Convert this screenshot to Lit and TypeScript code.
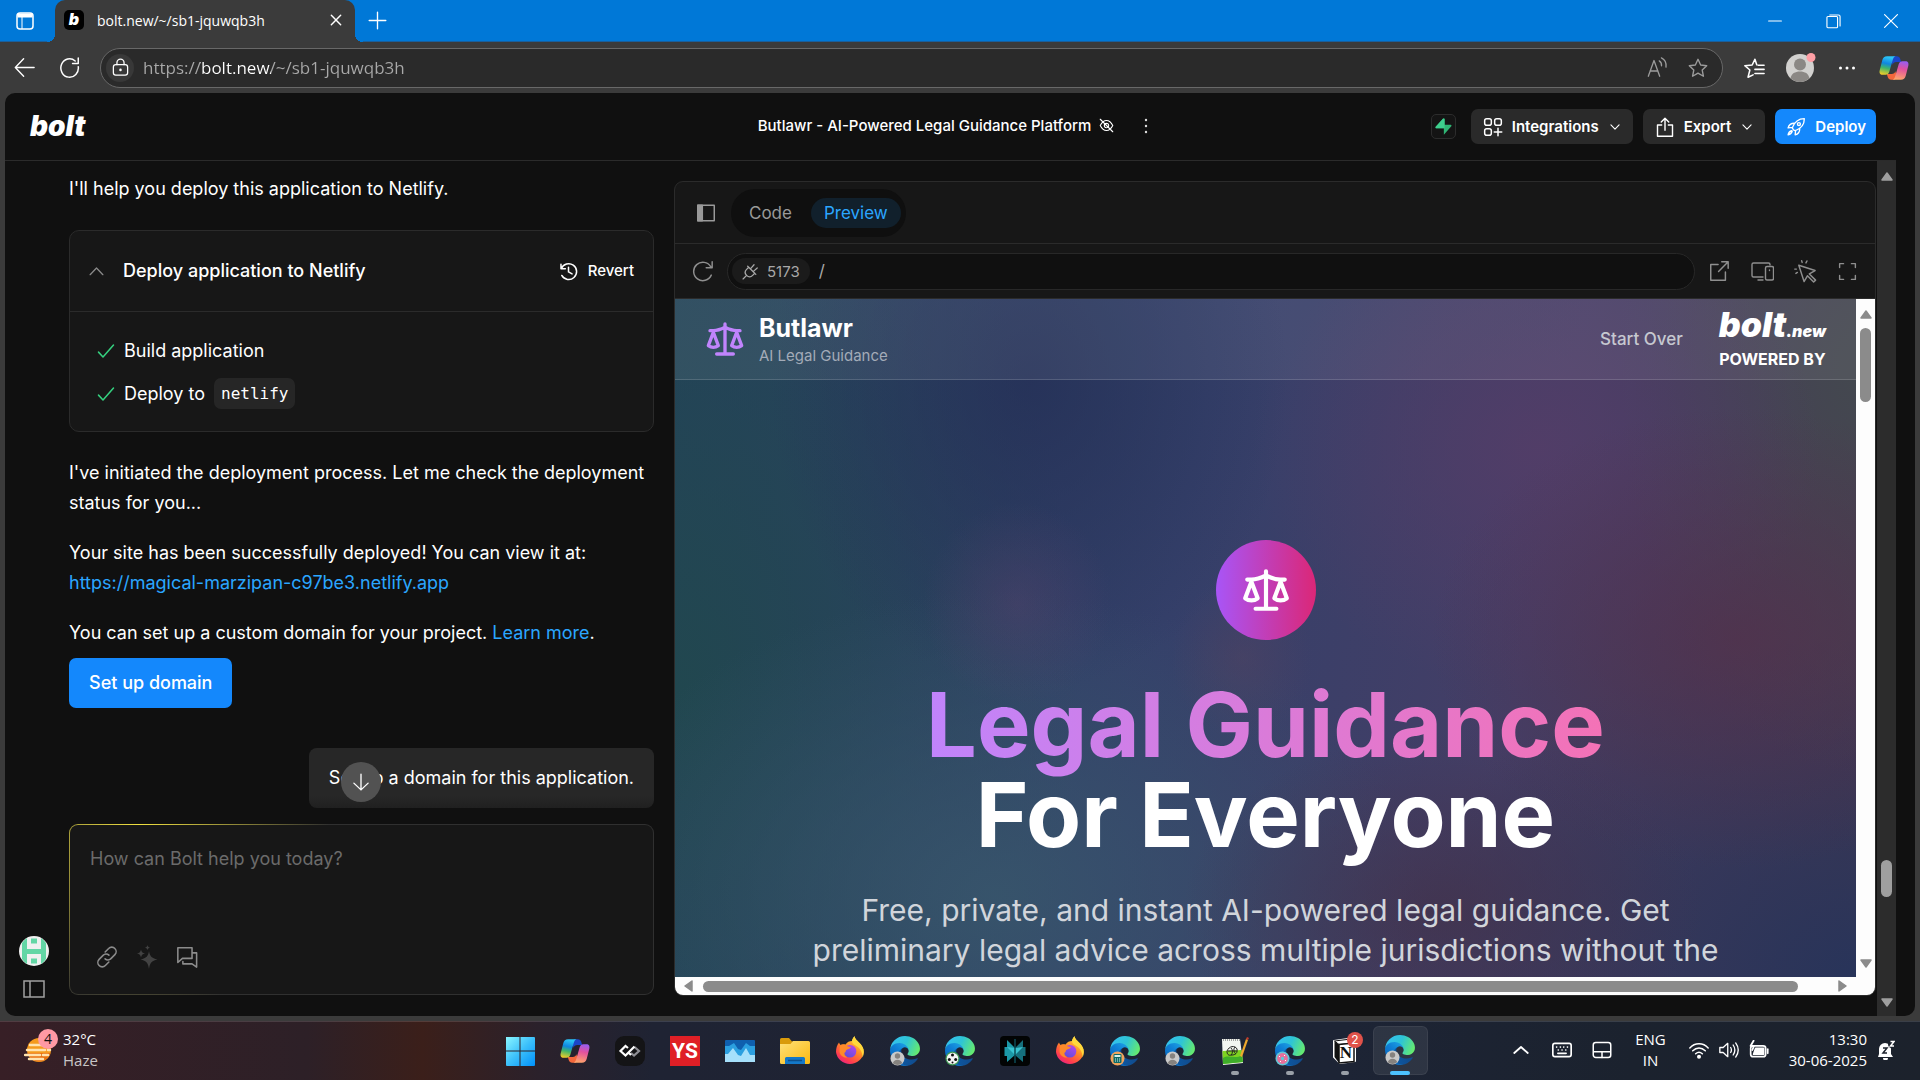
import { LitElement, html, css, svg, nothing, type TemplateResult } from "lit";
import { customElement } from "lit/decorators.js";
import { classMap } from "lit/directives/class-map.js";

/** Stroked icon drawn on a 24-unit grid. */
const line = (size: number, body: TemplateResult, width = 1.5, cls = "") => html`
  <svg class="icon ${cls}" width=${size} height=${size} viewBox="0 0 24 24" fill="none"
    stroke="currentColor" stroke-width=${width} stroke-linecap="round" stroke-linejoin="round"
    aria-hidden="true">${body}</svg>`;

const chevronDown = svg`<path d="m5 8.500 7 7 7-7"/>`;
const chevronUp = svg`<path d="m3 16.500 9-9.500 9 9.500"/>`;
const scales = svg`
  <path d="m16 16 3-8 3 8c-.87.65-1.920 1-3 1s-2.130-.35-3-1Z"/>
  <path d="m2 16 3-8 3 8c-.87.65-1.920 1-3 1s-2.130-.35-3-1Z"/>
  <path d="M7 21h10M12 3v18M3 7h2c2 0 5-1 7-2 2 1 5 2 7 2h2"/>`;
const star = svg`<path d="m12 2.500 2.900 6.200 6.600.8-4.900 4.700 1.300 6.800-5.900-3.400-5.900 3.400 1.300-6.800-4.900-4.700 6.600-.8z"/>`;

const copilot = (size: number) => html`
  <svg class="icon" width=${size} height=${size} viewBox="0 0 30 30" aria-hidden="true">
    <path d="M14.500 4h3.200c1.600 0 2.600.8 3.100 2.300l.9 3h-4.600c-1.800 0-2.800.8-3.400 2.600l-1.500-5.500z" fill="#1b45c8"/>
    <path d="M15.500 26h-3.200c-1.600 0-2.600-.8-3.100-2.300l-.9-3h4.600c1.800 0 2.800-.8 3.400-2.600l1.500 5.500z" fill="#f4683c"/>
    <path d="M8.500 4h8c-1.500.5-2.200 1.700-2.700 3.500l-3.200 11c-.6 1.900-1.700 2.800-3.500 2.800H4.300c-2.500 0-3.300-2-2.700-4.300L4 7.800C4.700 5.300 6 4 8.500 4z" fill="url(#cp1)"/>
    <path d="M21.500 26h-8c1.500-.5 2.200-1.700 2.700-3.500l3.200-11c.6-1.900 1.700-2.800 3.500-2.800h2.800c2.500 0 3.300 2 2.700 4.300L26 22.200c-.7 2.500-2 3.800-4.500 3.800z" fill="url(#cp2)"/>
  </svg>`;

const personBadge = svg`
  <circle cx="7.500" cy="22.500" r="7" fill="#c9c9c9"/>
  <circle cx="7.500" cy="20" r="2.700" fill="#85827f"/>
  <path d="M2.800 27.200a4.900 4.900 0 0 1 9.400 0 7 7 0 0 1-9.400 0z" fill="#85827f"/>`;
const ballBadge = svg`
  <circle cx="7.500" cy="22.500" r="7" fill="#3f9a55"/><circle cx="7.500" cy="22.500" r="5.800" fill="#f4f4f4"/>
  <circle cx="7.500" cy="19" r="1.500" fill="#111"/><circle cx="4.300" cy="23.500" r="1.500" fill="#111"/>
  <circle cx="10.700" cy="23.500" r="1.500" fill="#111"/><circle cx="7.500" cy="26.500" r="1" fill="#111"/>`;
const calcBadge = svg`
  <circle cx="7.500" cy="22.500" r="7" fill="#f0a45d"/><rect x="3.500" y="18" width="8" height="9" rx="1" fill="#0f6b66"/>
  <rect x="4.500" y="19" width="6" height="2" fill="#d9f0ea"/>
  <path d="M5 23h1M7 23h1M9 23h1M5 25h1M7 25h1M9 25h1" stroke="#d9f0ea"/>`;
const donutBadge = svg`
  <circle cx="7.500" cy="22.500" r="7" fill="#63c7d6"/><circle cx="7.500" cy="22.500" r="3.600" fill="none" stroke="#e86f9c" stroke-width="3.600"/>
  <path d="M4 21l1-1M9 19l1 1M11 24l-1 1M5 25l1 1" stroke="#fff"/>`;

const edge = (badge: unknown) => html`
  <svg class="icon" width="30" height="30" viewBox="0 0 30 30" aria-hidden="true">
    <g transform="scale(.117)">
      <path fill="url(#eg1)" d="M231 190.500c-3.400 1.800-6.900 3.400-10.500 4.700a101.500 101.500 0 0 1-35.900 6.500c-47.300 0-88.500-32.500-88.500-74.300 0-11.400 6.400-21.900 16.400-27.300-42.800 1.800-53.800 46.400-53.800 72.500 0 73.900 68.100 81.400 82.800 81.400 7.900 0 19.800-2.300 27-4.600l1.300-.4a128.300 128.300 0 0 0 66.600-52.800 4 4 0 0 0-5.400-5.700z"/>
      <path fill="url(#eg2)" d="M105.700 241.400a79.200 79.200 0 0 1-22.700-21.300 80.700 80.700 0 0 1 29.500-120c3.200-1.500 8.400-4.100 15.500-4a32.400 32.400 0 0 1 25.700 13 31.900 31.900 0 0 1 6.300 18.700c0-.2 24.500-79.600-80-79.600-43.900 0-80 41.700-80 78.200a130.200 130.200 0 0 0 12.100 56 128 128 0 0 0 156.400 67 75.500 75.500 0 0 1-62.800-8z"/>
      <path fill="url(#eg3)" d="M152.300 148.900c-.9 1-3.400 2.500-3.400 5.600 0 2.600 1.700 5.100 4.700 7.200 14.400 10 41.500 8.700 41.600 8.700 10.700 0 21.100-2.900 30.300-8.300A61.400 61.400 0 0 0 256 109.200c.3-22.400-8-37.300-11.300-43.900C223.500 23.900 177.700 0 128 0A128 128 0 0 0 0 126.200c.5-36.500 36.800-66 80-66 3.500 0 23.500.3 42 10.100 16.300 8.600 24.900 18.900 30.800 29.200 6.200 10.700 7.300 24.100 7.300 29.500 0 5.300-2.700 13.300-7.800 19.900z"/>
    </g>
    ${badge}
  </svg>`;

const firefox = html`
  <svg class="icon" width="30" height="30" viewBox="0 0 30 30" aria-hidden="true">
    <path d="M4 6.500c.3 1 .8 1.700 1.500 2.400C7 8 9 8 10.500 8.600 12 6 14.500 5 17 5c.3-1.700 1.200-3.400 2.600-4.700 .3 2.600 2.200 3.900 4.200 5.900 3.300 3.200 5 6 5 9.800A14 13.500 0 0 1 1 16c0-3.600 1-7 3-9.500z" fill="url(#ff1)"/>
    <circle cx="15" cy="15.300" r="6.300" fill="url(#ff2)"/>
    <path d="M5.500 9c2-.9 4-.6 5.500.5 1.500 1 3 1.200 5 1.300-.3 1.600-2 2.200-3.700 2.700-1.300.5-1.800 1.500-1.600 2.600-2 .3-2 4 1.800 5.300-5 .5-8-3-8-6.500 0-2.300.3-4.300 1-5.900z" fill="#ff8a2a"/>
    <path d="M19.600.3c.3 2.600 2.200 3.900 4.200 5.900 3.300 3.200 5 6 5 9.800 0 2-.4 3.800-1.200 5.400-.2-5.900-2.600-9.400-7.100-11.900C18 8 17 7 17 5c.3-1.700 1.200-3.400 2.600-4.700z" fill="#ffd93b"/>
  </svg>`;

interface TaskbarApp { name: string; icon: TemplateResult; open?: boolean; active?: boolean; }

const taskbarApps: TaskbarApp[] = [
  { name: "Start", icon: html`<svg class="icon" width="30" height="30" viewBox="0 0 30 30" aria-hidden="true"><path fill="url(#wn)" d="M1 1h13.500v13.500H1zM15.500 1H29a1 1 0 0 1 1 1v12.500H15.500zM1 15.500h13.500V30H2a1 1 0 0 1-1-1zM15.500 15.500H30V29a1 1 0 0 1-1 1H15.500z"/></svg>` },
  { name: "Copilot", icon: copilot(32) },
  { name: "Dev tools", icon: html`<svg class="icon" width="30" height="30" viewBox="0 0 30 30" aria-hidden="true"><rect width="30" height="30" rx="9" fill="#141416"/><path d="m16 17 3 2.500 5-4.500-4.500-4" fill="none" stroke="#8f8f95" stroke-width="2.200"/><path d="m13 12-2.500-2L5.500 15l5 4.500 9-9M13.500 16.500l2.500 2.500" fill="none" stroke="#fff" stroke-width="2.200"/></svg>` },
  { name: "YourStory", icon: html`<span class="ys">YS</span>` },
  { name: "Performance", icon: html`<svg class="icon" width="30" height="30" viewBox="0 0 30 30" aria-hidden="true"><rect y="4" width="30" height="22" rx="1" fill="#0f5fae"/><path d="M0 10h4l5-3 4 6 3 1 5-7 4 3h5v15H0z" fill="#2b9fe0"/><path d="M0 18h3l5-6 5 7 3 1 5-8 4 7h5v7H0z" fill="#a6e0fb"/></svg>` },
  { name: "File Explorer", icon: html`<svg class="icon" width="30" height="30" viewBox="0 0 30 30" aria-hidden="true"><path d="M0 3.500A1.500 1.500 0 0 1 1.500 2H9l3 3.500H28v8H0z" fill="#d99b0b"/><path d="M0 8h10.500L13 5h15.500A1.500 1.500 0 0 1 30 6.500v20a1.500 1.500 0 0 1-1.500 1.500h-27A1.500 1.500 0 0 1 0 26.500z" fill="url(#fd)"/><path d="M5 28v-5.500A1.500 1.500 0 0 1 6.500 21h17a1.500 1.500 0 0 1 1.500 1.500V28z" fill="#1478c8"/><path d="M8 24.500h14" stroke="#0d4f8b" stroke-width="1.500"/></svg>` },
  { name: "Firefox", icon: firefox },
  { name: "Edge, personal", icon: edge(personBadge) },
  { name: "Edge, football", icon: edge(ballBadge) },
  { name: "Perplexity", icon: html`<svg class="icon" width="30" height="30" viewBox="0 0 30 30" aria-hidden="true"><rect width="30" height="30" rx="4" fill="#020404"/><path d="M15 12 7 4v7H4.500v9H7v6l8-7z" fill="#1c98a6"/><path d="m15 12 8-8v7h2.500v9H23v6l-8-7z" fill="#15707d"/><path d="m15 12-8-1 8 8 8-8z" fill="#38c3cf"/><path d="M15 3v24" stroke="#0c4a54" stroke-width="1.500"/></svg>` },
  { name: "Firefox, private", icon: firefox },
  { name: "Edge, calculator", icon: edge(calcBadge) },
  { name: "Edge, profile 2", icon: edge(personBadge) },
  { name: "Notepad++", open: true, icon: html`<svg class="icon" width="30" height="30" viewBox="0 0 30 30" aria-hidden="true"><path d="m2 3 18 0 3 24-20 2z" fill="#f3f6f1"/><path d="m2.500 15 19-1 1.500 12-20 2z" fill="#7ed321"/><path d="M3 22c6-4 12 2 19-3l1 7-20 2z" fill="#3fae2a"/><path d="M3 4h17" stroke="#555" stroke-dasharray="1 1"/><path d="M7 15c2-5 8-6 10-2 1 4-2 6-5 6-4 1-5-1-5-4zM8 15h9M11 12c2 2 2 5 0 7M15 11c-2 2-1 6 1 7" fill="none" stroke="#222"/><path d="m20 20 6-17 2 1-6 17z" fill="#f0a92e"/><path d="m26 3 1-2 2 1-1 2z" fill="#c43b2c"/></svg>` },
  { name: "Edge, profile 3", open: true, icon: edge(donutBadge) },
  { name: "Notion", open: true, icon: html`<span class="notion"><svg class="icon" width="30" height="30" viewBox="0 0 30 30" aria-hidden="true"><path d="m4 5 14-2 7 4v18l-15 2-6-6z" fill="#fff" stroke="#fff" stroke-width="2" stroke-linejoin="round"/><path d="m4.500 5 12.500-1.500L24 7 9 8.500z" fill="#fff" stroke="#111"/><path d="m4.500 5 4.500 4v18l-4.500-6z" fill="#111"/><path d="m9 8.500 15-1.500v18.500L9 27z" fill="#fff" stroke="#111" stroke-width="1.500"/></svg><b class="notion-n">N</b><b class="notion-count">2</b></span>` },
  { name: "Edge, bolt.new", active: true, icon: edge(personBadge) },
];

@customElement("app-root")
export class AppRoot extends LitElement {
  static styles = css`
    :host {
      display: block;
      --ui: "Open Sans", "Noto Sans", sans-serif;
      --inter: "Inter", "Liberation Sans", sans-serif;
      --line: #2b2b2b;
      --blue: #1488fc;
      --link: #2ba6ff;
      font-family: var(--inter);
      color: #fff;
    }
    * { box-sizing: border-box; }
    button { font: inherit; color: inherit; background: none; border: 0; padding: 0; margin: 0; display: flex; align-items: center; justify-content: center; cursor: pointer; }
    input, textarea { font: inherit; color: inherit; background: none; border: 0; padding: 0; margin: 0; outline: 0; }
    a { color: var(--link); text-decoration: none; }
    p, h1, h2, ul { margin: 0; padding: 0; list-style: none; font-weight: inherit; }
    h2 { font-size: inherit; }
    .icon { display: block; flex: none; }
    .defs { position: absolute; }
    .desktop { height: 100vh; display: flex; flex-direction: column; background: #3b3b3b; overflow: hidden; }

    /* window title bar */
    .titlebar { display: flex; height: 42px; flex: none; background: #0078d7; font-family: var(--ui); box-shadow: inset 0 -1px #1a5f9c; }
    .tab-actions { width: 50px; }
    .tab { display: flex; align-items: center; width: 300px; margin: 0 5px; padding: 0 12px 2px 9px; gap: 13px; background: #3b3b3b; border-radius: 10px 10px 0 0; font-size: 14px; position: relative; }
    .tab::before, .tab::after { content: ""; position: absolute; bottom: 0; width: 8px; height: 8px; }
    .tab::before { left: -8px; background: radial-gradient(circle at 0 0, #0078d7 8px, #3b3b3b 8px); }
    .tab::after { right: -8px; background: radial-gradient(circle at 100% 0, #0078d7 8px, #3b3b3b 8px); }
    .favicon { width: 20px; height: 20px; border-radius: 5px; background: #000; font: italic 900 16px/19px var(--inter); text-align: center; }
    .tab-title { flex: 1; }
    .new-tab { width: 34px; height: 40px; }
    .window-controls { margin-left: auto; display: flex; }
    .window-controls button { width: 58px; }

    /* browser toolbar */
    .toolbar { display: flex; align-items: center; height: 51px; flex: none; padding: 0 10px 0 14px; font-family: var(--ui); }
    .toolbar .reload { margin: 0 20px 0 24px; }
    .address { flex: 1; display: flex; align-items: center; height: 40px; border: 1px solid #686868; border-radius: 20px; background: #2a2a2a; padding: 0 13px 0 5px; }
    .site-info { width: 28px; height: 28px; border-radius: 50%; background: #383838; }
    .url { flex: 1; min-width: 0; margin-left: 9px; font-size: 17px; line-height: 30px; color: transparent; background: linear-gradient(90deg, #a9a9a9 57px, #fff 57px 128px, #a9a9a9 128px); background-clip: text; -webkit-background-clip: text; }
    .address-tools { display: flex; gap: 19px; color: #9c9c9c; }
    .browser-tools { display: flex; align-items: center; gap: 20px; margin-left: 20px; }
    .profile { border-radius: 50%; }

    /* page frame */
    .viewport { flex: 1; min-height: 0; padding: 0 5px 5px; }
    .page { height: 100%; display: flex; flex-direction: column; background: #101010; border-radius: 10px; overflow: hidden; padding-right: 19px; }
    .app-header { display: grid; grid-template-columns: 1fr auto 1fr; align-items: center; height: 68px; flex: none; padding: 0 20px 0 25px; border-bottom: 1px solid var(--line); font-size: 15px; font-weight: 500; }
    .logo { font: italic 900 28px/32px var(--inter); color: #fff; justify-self: start; padding-bottom: 2px; }
    .project { display: flex; align-items: center; gap: 8px; padding: 0 0 2px 14px; }
    .project .menu { width: 32px; height: 20px; margin-left: 8px; }
    .header-actions { display: flex; justify-self: end; align-items: center; gap: 10px; }
    .supabase { width: 25px; height: 25px; border: 1px solid #2c2c2c; border-radius: 5px; background: #141414; margin-right: 5px; }
    .action { height: 35px; border-radius: 7px; background: #2a2a2a; padding: 0 11px 0 12px; gap: 9px; font-weight: 600; }
    .action.primary { background: var(--blue); padding: 0 10px 0 11px; }

    .main { flex: 1; min-height: 0; display: grid; grid-template-columns: 64px 585px minmax(0, 1fr) 20px; }
    .rail { display: flex; flex-direction: column; justify-content: flex-end; align-items: center; gap: 12px; padding: 0 6px 16px 0; color: #a0a0a0; }

    /* conversation */
    .chat { display: flex; flex-direction: column; min-height: 0; padding-bottom: 21px; font-size: 18px; line-height: 30px; }
    .messages { flex: 1; min-height: 0; display: flex; flex-direction: column; position: relative; padding-top: 13px; gap: 20px; }
    .artifact { border: 1px solid var(--line); border-radius: 10px; background: #171717; margin: 6px 0; }
    .artifact-head { display: flex; align-items: center; height: 81px; border-bottom: 1px solid var(--line); padding: 0 19px 0 18px; font-weight: 500; color: #fff; }
    .artifact-head .toggle { color: #8a8a8a; margin-right: 18px; }
    .artifact-title { flex: 1; }
    .revert { gap: 10px; font-size: 15px; }
    .steps { display: flex; flex-direction: column; gap: 12px; padding: 23px 27px 22px; }
    .steps li { display: flex; align-items: center; height: 31px; gap: 9px; }
    .steps .icon { color: #35d07f; }
    .code { font: 16px/31px "DejaVu Sans Mono", monospace; background: #262626; border-radius: 7px; padding: 0 7px; }
    .domain { display: flex; flex-direction: column; align-items: flex-start; gap: 10px; margin-bottom: 20px; }
    .domain-button { height: 50px; padding: 0 20px; border-radius: 7px; background: var(--blue); font-weight: 500; }
    .bubble { align-self: flex-end; background: linear-gradient(#272727 80%, #202020); border-radius: 8px; padding: 15px 20px; }
    .jump { position: absolute; left: 272px; bottom: 22px; width: 40px; height: 40px; border-radius: 50%; background: #525252; }
    .composer { height: 171px; flex: none; display: flex; flex-direction: column; border: 1px solid transparent; border-radius: 9px; padding: 19px 20px 25px; background: linear-gradient(#171717, #171717) padding-box, radial-gradient(circle 190px at 70px 0, #f0e040, #303030) border-box; }
    .composer textarea { flex: 1; min-height: 0; resize: none; line-height: 30px; }
    .composer textarea::placeholder { color: #6b6b6b; }
    .composer-tools { display: flex; gap: 18px; padding-left: 6px; color: #8c8c8c; }
    .composer-tools .off { color: #424242; }

    /* workbench */
    .workbench { margin: 20px 0 20px 20px; display: flex; flex-direction: column; min-height: 0; border: 1px solid var(--line); border-radius: 9px; background: #171717; overflow: hidden; }
    .bench-head { height: 62px; flex: none; display: flex; align-items: center; gap: 14px; padding: 0 20px; border-bottom: 1px solid var(--line); color: #9a9a9a; }
    .views { display: flex; align-items: center; gap: 6px; height: 48px; padding: 0 5px; border-radius: 24px; background: #0f0f0f; font-size: 17px; }
    .views button { height: 30px; padding: 0 13px; border-radius: 15px; }
    .views .on { background: #11202c; color: var(--link); }
    .bench-bar { height: 55px; flex: none; display: flex; align-items: center; gap: 13px; padding: 0 17px; border-bottom: 1px solid var(--line); color: #8f8f8f; }
    .path { flex: 1; display: flex; align-items: center; height: 37px; border: 1px solid #282828; border-radius: 19px; background: #101010; padding: 0 4px; color: #a8a8a8; font-size: 17px; }
    .port { height: 26px; border-radius: 13px; background: #1b1b1b; padding: 0 10px; gap: 8px; font-size: 15px; }
    .path input { flex: 1; min-width: 0; margin-left: 9px; }
    .bench-tools { display: flex; gap: 20px; }

    .preview { flex: 1; min-height: 0; display: grid; grid-template-columns: minmax(0, 1fr) 19px; grid-template-rows: minmax(0, 1fr) 18px; background: #fdfdfd; }
    .site { overflow: hidden; background:
        radial-gradient(ellipse 8% 15% at 29% 45%, #5a446e66, #5a446e00),
        radial-gradient(ellipse 6% 12% at 48% 53%, #5e455c55, #5e455c00),
        radial-gradient(ellipse 26% 34% at 90% 50%, #54304ab0, #54304a00),
        radial-gradient(ellipse 24% 36% at 73% 22%, #563d68c0, #563d6800),
        radial-gradient(ellipse 20% 60% at 100% 10%, #444a4ee0, #444a4e00),
        radial-gradient(ellipse 22% 26% at 65% 90%, #42324ac0, #42324a00),
        radial-gradient(ellipse 40% 50% at 100% 100%, #28345a, #28345a00),
        radial-gradient(ellipse 36% 45% at 27% 88%, #38566ce0, #38566c00),
        radial-gradient(ellipse 22% 46% at 30% 12%, #242f56c8, #242f5600),
        radial-gradient(ellipse 34% 100% at 0 58%, #21474f, #21474f00),
        linear-gradient(100deg, #25415e, #35406a 42%, #443e66 70%, #443850); }
    .site-head { display: flex; align-items: center; height: 81px; padding: 0 30px; background: #ffffff12; border-bottom: 1px solid #ffffff26; }
    .site-head .brand { display: flex; align-items: center; gap: 14px; flex: 1; }
    .site-head .brand > svg { color: #c084fc; }
    .brand-name { font-size: 25px; line-height: 30px; font-weight: 700; padding-top: 3px; }
    .brand-sub { font-size: 15px; line-height: 25px; color: #a3abb8; }
    .start-over { font-size: 17px; font-weight: 500; color: #c6c8d0; margin-right: 36px; }
    .powered { display: flex; flex-direction: column; align-items: center; font-weight: 700; font-size: 16px; line-height: 22px; color: #fff; }
    .powered-logo { display: flex; align-items: baseline; font: italic 900 34px/34px var(--inter); }
    .powered-logo small { font-size: 16px; }
    .hero { display: flex; flex-direction: column; align-items: center; padding-top: 160px; text-align: center; }
    .hero-mark { display: grid; place-items: center; width: 100px; height: 100px; border-radius: 50%; background: linear-gradient(90deg, #a855f7, #db2777); }
    .hero h1 { margin: 40px 0 30px; font-size: 90px; line-height: 90px; font-weight: 700; }
    .hero h1 span { background: linear-gradient(90deg, #c084fc, #f472b6); background-clip: text; -webkit-background-clip: text; color: transparent; }
    .hero p { max-width: 960px; font-size: 30px; line-height: 40px; color: #d1d5db; white-space: nowrap; }

    /* scrollbars */
    .bar { display: flex; align-items: center; color: #8b8b8b; }
    .bar.vertical { flex-direction: column; padding: 10px 0 8px; }
    .bar.horizontal { padding: 0 8px; gap: 8px; }
    .thumb { background: #8b8b8b; border-radius: 6px; }
    .bar.vertical .thumb { width: 11px; }
    .bar.horizontal .thumb { height: 11px; flex: 1; margin-right: 30px; }
    .bar .rest { flex: 1; }
    .bar.dark { margin-left: 1px; background: #2c2c2c; color: #9f9f9f; }
    .bar.dark .thumb { background: #9f9f9f; height: 37px; }
    .inner-thumb { height: 74px; margin-top: 7px; }
    .before { flex: 41; }
    .after { flex: 6; }

    /* taskbar */
    .taskbar { height: 59px; flex: none; display: grid; grid-template-columns: 1fr auto 1fr; grid-template-rows: minmax(0, 1fr); align-items: stretch; border-top: 1px solid #ffffff22; font-family: var(--ui); font-size: 15px; line-height: 21px;
      background: linear-gradient(90deg, #371f26, #2d2027 16%, #3b1f1a 22%, #2b212b 28%, #1f2333 34%, #1d2435 70%, #1b222e 85%, #1c222c); }
    .weather { justify-content: flex-start; gap: 9px; padding-left: 24px; text-align: left; padding-bottom: 2px; }
    .weather small { display: block; font-size: 15px; color: #c8c5c6; }
    .weather-icon { position: relative; }
    .alert-count { position: absolute; left: 14px; top: -6px; width: 20px; height: 20px; border-radius: 50%; background: #ff99a4; color: #111; text-align: center; line-height: 20px; font-size: 14px; font-weight: 400; }
    .apps { display: flex; }
    .apps button { width: 55px; position: relative; padding-bottom: 1px; }
    .apps .active { background: #ffffff14; border-radius: 6px; margin: 4px 0; height: 49px; box-shadow: inset 0 0 0 1px #ffffff10; }
    .apps .open::after, .apps .active::after { content: ""; position: absolute; bottom: 5px; width: 8px; height: 4px; border-radius: 2px; background: #9aa0a8; }
    .apps .active::after { bottom: 0; width: 20px; background: #4cc2ff; }
    .ys { width: 30px; height: 30px; background: #df1f26; font: 700 21px/30px "Roboto", sans-serif; text-align: center; }
    .notion { position: relative; }
    .notion-n { position: absolute; left: 8px; top: 7px; width: 16px; font: 700 17px/20px "Liberation Serif", serif; color: #111; text-align: center; }
    .notion-count { position: absolute; left: 17px; top: -4px; width: 16px; height: 16px; border-radius: 50%; background: #e0524a; font: 12px/16px var(--inter); text-align: center; }
    .tray { display: flex; justify-content: flex-end; align-items: center; padding: 0 25px 2px 0; }
    .tray .language { flex-direction: column; margin-right: 23px; }
    .tray .status { gap: 10px; margin-right: 20px; }
    .tray .clock { flex-direction: column; align-items: flex-end; margin-right: 10px; }
    .tray .quick { margin-right: 20px; }
    .tray .quick.first { margin-right: 22px; }
    .tray .quick.last { margin-right: 23px; }
  `;

  private defs() {
    return html`<svg class="defs" width="0" height="0" aria-hidden="true"><defs>
      <linearGradient id="wn" x1="0" y1="0" x2="1" y2="1"><stop stop-color="#8af6ff"/><stop offset=".5" stop-color="#3cc0fa"/><stop offset="1" stop-color="#0090fa"/></linearGradient>
      <linearGradient id="cp1" x1=".3" y1="0" x2=".1" y2="1"><stop stop-color="#2bc3f5"/><stop offset=".35" stop-color="#0f86e0"/><stop offset=".6" stop-color="#3fb56a"/><stop offset="1" stop-color="#ffce22"/></linearGradient>
      <linearGradient id="cp2" x1=".6" y1="0" x2=".4" y2="1"><stop stop-color="#9a5df0"/><stop offset=".4" stop-color="#e2519e"/><stop offset="1" stop-color="#ffa56a"/></linearGradient>
      <linearGradient id="eg1" x1=".1" y1=".5" x2="1" y2=".5"><stop stop-color="#0c59a4"/><stop offset="1" stop-color="#114a8b"/></linearGradient>
      <linearGradient id="eg2" x1=".9" y1=".2" x2=".3" y2="1"><stop stop-color="#1b9de2"/><stop offset=".4" stop-color="#0f7fd6"/><stop offset="1" stop-color="#0a64b8"/></linearGradient>
      <linearGradient id="eg3" x1="0" y1=".3" x2="1" y2=".6"><stop stop-color="#35c1f1"/><stop offset=".5" stop-color="#2ec4d6"/><stop offset="1" stop-color="#66eb6e"/></linearGradient>
      <linearGradient id="fd" x1="0" y1="0" x2="1" y2="1"><stop stop-color="#ffe17a"/><stop offset="1" stop-color="#fbb90f"/></linearGradient>
      <linearGradient id="ff1" x1=".8" y1="0" x2=".2" y2="1"><stop stop-color="#ffe14a"/><stop offset=".45" stop-color="#ff8a24"/><stop offset=".8" stop-color="#ff3b50"/><stop offset="1" stop-color="#e3208a"/></linearGradient>
      <linearGradient id="ff2" x1=".8" y1="0" x2=".2" y2="1"><stop stop-color="#b646ee"/><stop offset="1" stop-color="#5b4fd6"/></linearGradient>
    </defs></svg>`;
  }

  private arrow(dir: "up" | "down" | "left" | "right") {
    const d = { up: "M6 2 11 9H1z", down: "M6 10 1 3h10z", left: "M2 6l7-5v10z", right: "M10 6 3 1v10z" }[dir];
    return html`<svg class="icon" width="12" height="12" viewBox="0 0 12 12" aria-hidden="true"><path d=${d} fill="currentColor" stroke="currentColor" stroke-width="1.500" stroke-linejoin="round"/></svg>`;
  }

  private titleBar() {
    return html`<div class="titlebar">
      <button class="tab-actions" aria-label="Tab actions">
        <svg class="icon" width="18" height="18" viewBox="0 0 18 18" fill="none" stroke="#fff" stroke-width="1.500" aria-hidden="true"><rect x="1" y="1" width="16" height="16" rx="3"/><path d="M1.500 3.500h15" stroke-width="4"/><path d="M6 5v12" stroke-width="1"/></svg>
      </button>
      <div class="tab">
        <span class="favicon">b</span><span class="tab-title">bolt.new/~/sb1-jquwqb3h</span>
        <button aria-label="Close tab">${line(14, svg`<path d="M4 4l16 16M20 4 4 20"/>`, 2.5)}</button>
      </div>
      <button class="new-tab" aria-label="New tab">${line(19, svg`<path d="M12 1.500v21M1.500 12h21"/>`, 1.7)}</button>
      <div class="window-controls">
        <button aria-label="Minimize">${line(14, svg`<path d="M1 12h22"/>`, 1.8)}</button>
        <button aria-label="Restore">${line(15, svg`<rect x="1.500" y="4" width="17" height="18" rx="1.500"/><path d="M6 1.500h14a2.500 2.500 0 0 1 2.500 2.500v15"/>`, 1.8)}</button>
        <button aria-label="Close">${line(14, svg`<path d="M1 1l22 22M23 1 1 23"/>`, 2)}</button>
      </div>
    </div>`;
  }

  private toolbar() {
    return html`<div class="toolbar">
      <button aria-label="Back">${line(21, svg`<path d="M23 12H1.500M11 2 1.500 12 11 22"/>`, 1.6)}</button>
      <button class="reload" aria-label="Reload">${line(21, svg`<path d="M22 11a10 10.500 0 1 1-3.500-6.500M22 1v6.500h-6.500"/>`, 1.7)}</button>
      <div class="address">
        <button class="site-info" aria-label="Site information">${line(19, svg`<rect x="3" y="8.500" width="18" height="13" rx="3"/><path d="M7.500 8.500V6a4.500 4.500 0 0 1 9 0v2.500"/><circle cx="12" cy="15" r=".8" fill="currentColor"/>`, 1.6)}</button>
        <input class="url" aria-label="Address" .value=${"https://bolt.new/~/sb1-jquwqb3h"} />
        <div class="address-tools">
          <button aria-label="Read aloud">${line(21, svg`<path d="M1.500 22 8 4l6.500 18M3.500 16h9M14 4.500c1.800 1 2.800 3 2.600 5.500M16.500 1c3.800 1.800 5.800 5.500 5.200 10.500"/>`)}</button>
          <button aria-label="Add to favorites">${line(22, star)}</button>
        </div>
      </div>
      <div class="browser-tools">
        <button aria-label="Favorites">${line(22, svg`<path d="M15 8.500 13 2.500 10 8.700l-8 .8 5.500 4.700L5.500 22l5.500-2.500M16.500 9H23M13 13.500h10M13 18h10"/>`, 1.7)}</button>
        <button class="profile" aria-label="Profile">
          <svg class="icon" width="31" height="31" viewBox="0 0 31 31" aria-hidden="true"><circle cx="15" cy="16" r="14" fill="#d2d1cf"/><circle cx="15" cy="12.500" r="6" fill="#8b8885"/><path d="M5.500 26.300C6.500 21.500 10 19.500 15 19.500s8.500 2 9.500 6.800A14 14 0 0 1 15 30a14 14 0 0 1-9.500-3.700z" fill="#8b8885"/><circle cx="26" cy="5.500" r="4.500" fill="#ff9fa5"/></svg>
        </button>
        <button aria-label="Settings and more">
          <svg class="icon" width="22" height="22" viewBox="0 0 22 22" fill="#fff" aria-hidden="true"><circle cx="4.500" cy="11" r="1.500"/><circle cx="11" cy="11" r="1.500"/><circle cx="17.500" cy="11" r="1.500"/></svg>
        </button>
        <button aria-label="Copilot">${copilot(32)}</button>
      </div>
    </div>`;
  }

  private header() {
    return html`<header class="app-header">
      <a class="logo" href="#home">bolt</a>
      <div class="project">
        <span>Butlawr - AI-Powered Legal Guidance Platform</span>
        ${line(15, svg`<path d="M2 12c2.500-5 6-8 10-8s7.500 3 10 8c-2.500 5-6 8-10 8s-7.500-3-10-8zM15.500 12a3.500 3.500 0 1 1-7 0 3.500 3.500 0 0 1 7 0M2 2l20 20"/>`, 1.8)}
        <button class="menu" aria-label="Project menu"><svg class="icon" width="4" height="16" viewBox="0 0 4 16" fill="#ddd" aria-hidden="true"><circle cx="2" cy="2" r="1.200"/><circle cx="2" cy="8" r="1.200"/><circle cx="2" cy="14" r="1.200"/></svg></button>
      </div>
      <div class="header-actions">
        <button class="supabase" aria-label="Supabase"><svg class="icon" width="17" height="17" viewBox="0 0 24 24" aria-hidden="true"><path d="M13.500 1v8.500H22c1.200 0 1.700 1.300 1 2.200L12.500 23.500V14.500H2c-1.200 0-1.700-1.300-1-2.200L11.500.7z" fill="#2fb574"/><path d="M13.500 1v13.500H2c-1.200 0-1.700-1.300-1-2.200L11.500.7z" fill="#3ecf8e"/></svg></button>
        <button class="action">${line(20, svg`<rect x="2" y="2" width="8" height="8" rx="2.500"/><rect x="14" y="2" width="8" height="8" rx="2.500"/><rect x="2" y="14" width="8" height="8" rx="2.500"/><path d="M18 13.500v9M13.500 18h9"/>`, 1.8)}<span>Integrations</span>${line(14, chevronDown, 1.9)}</button>
        <button class="action">${line(20, svg`<path d="M8 9.500H3V23h18V9.500h-5M12 16V1.500M7.500 6 12 1.500 16.500 6"/>`, 1.7)}<span>Export</span>${line(14, chevronDown, 1.9)}</button>
        <button class="action primary">${line(20, svg`<path d="M9 15.500 7.500 13C10 6.500 14.500 2 22 2c0 7.500-4.500 12-11 14.500zM8 12.500l-5.500.5c1-3.500 3.500-5.500 7.500-5.500M11.500 16l-.5 5.500c3.500-1 5.500-3.500 5.500-7.500M7 16.500c-2.500.5-4 2-4.500 5 3-.5 4.500-2 5-4.500"/><circle cx="15.500" cy="8.500" r="1.800"/>`, 1.6)}<span>Deploy</span></button>
      </div>
    </header>`;
  }

  private chat() {
    const check = line(18, svg`<path d="m2 13.500 6 6.500L22 4"/>`, 2);
    return html`<section class="chat">
      <div class="messages">
        <p>I'll help you deploy this application to Netlify.</p>
        <div class="artifact">
          <div class="artifact-head">
            <button class="toggle" aria-label="Collapse">${line(17, chevronUp, 1.8)}</button>
            <h2 class="artifact-title">Deploy application to Netlify</h2>
            <button class="revert">${line(19, svg`<path d="M2.500 3v5.500H8M3 8.300A10 10 0 1 1 3.500 17M12 6.500V12.500l4.500 2.500"/>`, 1.9)}<span>Revert</span></button>
          </div>
          <ul class="steps">
            <li>${check}<span>Build application</span></li>
            <li>${check}<span>Deploy to</span><span class="code">netlify</span></li>
          </ul>
        </div>
        <p>I've initiated the deployment process. Let me check the deployment status for you...</p>
        <p>Your site has been successfully deployed! You can view it at:<br /><a href="#site">https://magical-marzipan-c97be3.netlify.app</a></p>
        <div class="domain">
          <p>You can set up a custom domain for your project. <a href="#docs">Learn more</a>.</p>
          <button class="domain-button">Set up domain</button>
        </div>
        <div class="bubble">Set up a domain for this application.</div>
        <button class="jump" aria-label="Scroll to latest">${line(18, svg`<path d="M12 1.500v21M2.500 13.500l9.500 9 9.500-9"/>`, 1.8)}</button>
      </div>
      <div class="composer">
        <textarea aria-label="Message" placeholder="How can Bolt help you today?"></textarea>
        <div class="composer-tools">
          <button aria-label="Attach link">${line(22, svg`<path d="m10 6.500 3.800-3.800a4.600 4.600 0 0 1 6.800 0 4.800 4.800 0 0 1 0 6.700l-4.300 4.400a4.600 4.600 0 0 1-6.400.2M14 17.500l-3.800 3.800a4.600 4.600 0 0 1-6.800 0 4.800 4.800 0 0 1 0-6.700l4.300-4.400a4.600 4.600 0 0 1 6.400-.2"/>`, 1.7)}</button>
          <button class="off" aria-label="Enhance prompt"><svg class="icon" width="22" height="24" viewBox="0 0 22 24" fill="currentColor" aria-hidden="true"><path d="M13 6c.8 5 2.500 7.200 8.500 8.500C15.500 16 13.800 18 13 24c-.8-6-2.500-8-8.500-9.500C10.500 13.200 12.200 11 13 6zM5 4.500c.5 2.500 1.300 3.500 4 4-2.700.6-3.500 1.500-4 4-.5-2.500-1.300-3.400-4-4 2.700-.5 3.500-1.500 4-4zM11.500 0c.3 1.600.9 2.300 2.500 2.700-1.600.3-2.200 1-2.500 2.600-.3-1.600-.9-2.300-2.500-2.600 1.600-.4 2.200-1.100 2.500-2.700z"/></svg></button>
          <button aria-label="Discuss">${line(22, svg`<path d="M2 2h15.500v11.500H7L2 18zM7.500 17v2.500h10L22.500 23V7.500h-5"/>`, 1.7)}</button>
        </div>
      </div>
    </section>`;
  }

  private preview() {
    return html`<div class="preview">
      <div class="site">
        <div class="site-head">
          <div class="brand">${line(40, scales, 2)}<div><div class="brand-name">Butlawr</div><div class="brand-sub">AI Legal Guidance</div></div></div>
          <button class="start-over">Start Over</button>
          <a class="powered" href="#bolt"><span class="powered-logo">bolt<small>.new</small></span><span>POWERED BY</span></a>
        </div>
        <div class="hero">
          <div class="hero-mark">${line(50, scales, 2)}</div>
          <h1><span>Legal Guidance</span><br />For Everyone</h1>
          <p>Free, private, and instant AI-powered legal guidance. Get<br />preliminary legal advice across multiple jurisdictions without the</p>
        </div>
      </div>
      <div class="bar vertical">${this.arrow("up")}<div class="thumb inner-thumb"></div><div class="rest"></div>${this.arrow("down")}</div>
      <div class="bar horizontal">${this.arrow("left")}<div class="thumb"></div>${this.arrow("right")}</div>
    </div>`;
  }

  private workbench() {
    return html`<section class="workbench">
      <div class="bench-head">
        <button aria-label="Toggle chat">${line(22, svg`<path d="M3 3.500h18v17H3z"/><path d="M3 3.500h5v17H3z" fill="currentColor"/>`, 1.6)}</button>
        <div class="views"><button>Code</button><button class="on">Preview</button></div>
      </div>
      <div class="bench-bar">
        <button aria-label="Reload preview">${line(22, svg`<path d="M21 16.500A10 10 0 1 1 20.500 7.500M22 2v6.500h-6.500"/>`, 1.6)}</button>
        <div class="path">
          <button class="port">${line(17, svg`<path d="m1.500 22.500 5-5M6.500 17.500c-3-3-2.500-6 0-8.500l3-3 8.500 8.500-3 3c-2.500 2.500-5.500 3-8.500 0zM8 4.500 19.500 16M12.500 7.500l4.500-5M16.500 11.500l5-4.500"/>`, 1.8)}<span>5173</span></button>
          <input aria-label="Preview path" .value=${"/"} />
        </div>
        <div class="bench-tools">
          <button aria-label="Open in new tab">${line(22, svg`<path d="M11 5H3v17h16v-9M15 2h7v7M22 2 11.500 12.500"/>`, 1.6)}</button>
          <button aria-label="Devices">${line(24, svg`<path d="M13 18H3.500A1.500 1.500 0 0 1 2 16.500v-11A1.500 1.500 0 0 1 3.500 4h15A1.500 1.500 0 0 1 20 5.500V6M8 21h5"/><rect x="15.500" y="7.500" width="8" height="13.500" rx="1.500"/><path d="M19.500 11v.5"/>`, 1.4)}</button>
          <button aria-label="Inspect">${line(23, svg`<path d="m5 5.500 17 5.500-6 3.500 6.500 6.500-2 2-6.500-6.500-3.500 6zM2.500 9.500H.8M3.500 13l-1.500 1M8.500 2.500 8 .8M12.500 3 13.500 1"/>`, 1.5)}</button>
          <button aria-label="Full screen">${line(21, svg`<path d="M3 7.500V3h4.500M16.500 3H21v4.500M21 16.500V21h-4.500M7.500 21H3v-4.500"/>`, 1.6)}</button>
        </div>
      </div>
      ${this.preview()}
    </section>`;
  }

  private taskbar() {
    return html`<footer class="taskbar">
      <button class="weather">
        <span class="weather-icon">
          <svg class="icon" width="30" height="30" viewBox="0 0 30 30" aria-hidden="true"><circle cx="15" cy="15" r="12" fill="#f59a1c"/><path d="M3.500 18a12 12 0 0 0 23 0z" fill="#e8700f"/><path d="M6 10h12M3 15h18M24 15h2M1 20h15M19 20h5M5 24h14" stroke="#ffe3ae" stroke-width="2.500" stroke-linecap="round"/></svg>
          <b class="alert-count">4</b>
        </span>
        <span>32°C<small>Haze</small></span>
      </button>
      <nav class="apps">
        ${taskbarApps.map((app) => html`<button class=${classMap({ open: !!app.open, active: !!app.active })} aria-label=${app.name} aria-current=${app.active ? "true" : nothing}>${app.icon}</button>`)}
      </nav>
      <div class="tray">
        <button class="quick first" aria-label="Hidden icons">${line(18, svg`<path d="m3 16 9-8 9 8"/>`, 2.4)}</button>
        <button class="quick" aria-label="Touch keyboard">${line(20, svg`<rect x="1" y="4" width="22" height="16" rx="2.500"/><path d="M5.500 8.500h.1M10 8.500h.1M14 8.500h.1M18.500 8.500h.1M7.500 12h.1M12 12h.1M16.500 12h.1M7 16h10"/>`, 2)}</button>
        <button class="quick last" aria-label="Touchpad">${line(20, svg`<rect x="1.500" y="3" width="21" height="18" rx="3"/><path d="M2 14h20M12 14v7"/>`, 1.8)}</button>
        <button class="language"><span>ENG</span><span>IN</span></button>
        <button class="status" aria-label="Network, volume, battery">
          ${line(20, svg`<path d="M1 9.500c6-6.500 16-6.500 22 0M4.500 13c4.500-4.500 10.500-4.500 15 0M8 16.500c2.500-2.200 5.500-2.200 8 0"/><circle cx="12" cy="20" r="1.500" fill="currentColor"/>`, 1.8)}
          ${line(20, svg`<path d="M1 9h4l5.500-5v16L5 15H1zM14 9c1.200 2 1.200 4 0 6M17 6c2.700 4 2.700 8 0 12M20 3.500c4 5.500 4 11.500 0 17"/>`, 1.6)}
          ${line(20, svg`<rect x="2" y="7" width="18" height="13" rx="3"/><path d="M8 10h9.500v7h-12z" fill="currentColor"/><path d="M22.500 11v5"/><path d="M5.500 1 2 7h4l-2 5" stroke-width="2.200"/>`, 2)}
        </button>
        <button class="clock"><span>13:30</span><span>30-06-2025</span></button>
        <button aria-label="Notifications"><svg class="icon" width="18" height="20" viewBox="0 0 18 20" aria-hidden="true"><path d="M8 3a6 6 0 0 1 6 6v5l2 3H1l1-3V9a6 6 0 0 1 6-6zM6 18h5a2.500 2.500 0 0 1-5 0z" fill="#fff"/><path d="M6 8h4l-4 5h4" fill="none" stroke="#1c222c" stroke-width="1.500"/><circle cx="15" cy="4" r="4" fill="#1c222c"/><path d="M13.500 1.500h3.500l-3.500 4.500h3.500" fill="none" stroke="#fff" stroke-width="1.500"/></svg></button>
      </div>
    </footer>`;
  }

  render() {
    return html`${this.defs()}
      <div class="desktop">
        ${this.titleBar()} ${this.toolbar()}
        <div class="viewport">
          <div class="page">
            ${this.header()}
            <div class="main">
              <aside class="rail">
                <button aria-label="Account"><svg class="icon" width="30" height="30" viewBox="0 0 30 30" aria-hidden="true"><circle cx="15" cy="15" r="15" fill="#f0f0f0"/><path d="M3 7q2-3 5-5v11h14V2q3 2 5 5v16q-2 3-5 5V18H8v10q-3-2-5-5zM12 2.500h6v5h-6zM12 22.500h6v5h-6z" fill="#63d6a5"/></svg></button>
                <button aria-label="Open sidebar"><svg class="icon" width="22" height="22" viewBox="0 0 22 22" fill="none" stroke="currentColor" stroke-width="1.500" aria-hidden="true"><path d="M1 3h20v16H1zM7 3v16"/></svg></button>
              </aside>
              ${this.chat()} ${this.workbench()}
              <div class="bar vertical dark">${this.arrow("up")}<div class="before"></div><div class="thumb"></div><div class="after"></div>${this.arrow("down")}</div>
            </div>
          </div>
        </div>
        ${this.taskbar()}
      </div>`;
  }
}
